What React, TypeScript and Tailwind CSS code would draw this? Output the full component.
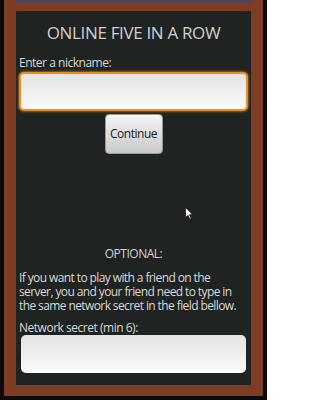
import React from 'react';

const font = { fontFamily: '"Open Sans", "Noto Sans", sans-serif' };

function Cursor() {
  return (
    <svg
      className="absolute left-[185px] top-[207px]"
      width="8"
      height="13"
      viewBox="0 0 8 13"
    >
      <path d="M0.5 0.5 L0.5 10.5 L3 8.3 L4.8 12.2 L6.2 11.5 L4.5 7.8 L7.5 7.6 Z" fill="#ffffff" stroke="#222" strokeWidth="0.8" />
    </svg>
  );
}

export default function App() {
  return (
    <div
      className="relative w-[267px] h-[400px] bg-[#0b0b0b] pl-[4px] pr-[4px] pb-[4px] overflow-hidden"
      style={font}
    >
      <div className="h-full bg-[#7e3d22] px-[12px] pb-[11px] flex flex-col">
        <div className="h-[3px] bg-[#4f4356]" />
        <div className="h-[8px]" />
        <div className="flex-1 bg-[#1f2321] flex flex-col px-[3px] text-[#d6d6d6]">
          <div className="mt-[12px] text-center text-[17px] leading-[20px] tracking-[-0.02em] text-[#cfcfcf]">
            ONLINE FIVE IN A ROW
          </div>
          <div className="mt-[13px] text-[12px] leading-[14px] tracking-[-0.04em] text-[#d8d8d8]">
            Enter a nickname:
          </div>
          <div className="mt-[2px] h-[39px] rounded-[5px] bg-[#f08a1c] p-[2px] shadow-[0_0_3px_#ff9a30]">
            <div className="h-full rounded-[3px] bg-gradient-to-b from-[#e4e4e4] to-[#fafafa]" />
          </div>
          <div className="mt-[3px] flex justify-center">
            <div className="w-[58px] h-[40px] rounded-[4px] border border-[#9a9a9a] bg-gradient-to-b from-[#f4f4f4] to-[#c9c9c9] flex items-center justify-center text-[12px] tracking-[-0.04em] text-[#1a1a1a]">
              Continue
            </div>
          </div>
          <div className="mt-[93px] text-center text-[12px] leading-[14px] tracking-[-0.04em] text-[#d2d2d2]">
            OPTIONAL:
          </div>
          <div className="mt-[10px] mr-[5px] text-[12px] leading-[14px] tracking-[-0.05em] text-[#d8d8d8]">
            If you want to play with a friend on the server, you and your friend need to type in the same network secret in the field bellow.
          </div>
          <div className="mt-[9px] text-[12px] leading-[12px] tracking-[-0.04em] text-[#d8d8d8]">
            Network secret (min 6):
          </div>
          <div className="mt-[1px] mx-[2px] h-[38px] rounded-[5px] bg-gradient-to-b from-[#e2e2e2] to-[#fbfbfb]" />
        </div>
      </div>
      <Cursor />
    </div>
  );
}
